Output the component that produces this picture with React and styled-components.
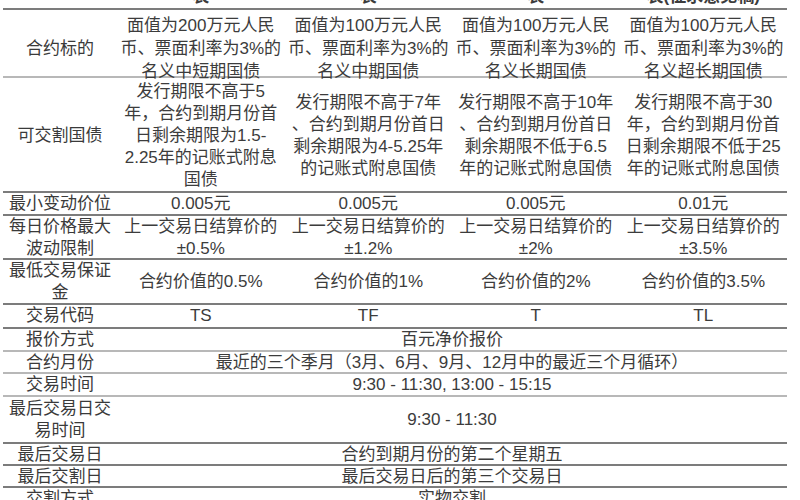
import React from "react";
import styled, { createGlobalStyle } from "styled-components";

const GlobalStyle = createGlobalStyle`
  html, body {
    margin: 0;
    padding: 0;
    background: #ffffff;
    overflow: hidden;
  }
  body {
    font-family: "Liberation Sans", "Noto Sans CJK SC", sans-serif;
    color: #3c3c3c;
  }
`;

const Page = styled.div`
  width: 800px;
  height: 500px;
  overflow: hidden;
  padding-left: 3px;
  box-sizing: border-box;
`;

const Table = styled.div`
  width: 784px;
  margin-top: -36px;
`;

const Row = styled.div`
  display: grid;
  grid-template-columns: 114px repeat(4, minmax(0, 1fr));
  height: ${(p) => p.$h}px;
  padding-top: ${(p) => p.$pt || 0}px;
  line-height: ${(p) => p.$lh || 22}px;
  box-sizing: border-box;
  border-bottom: 2px solid
    ${(p) => (p.$line === "light" ? "#b8b8b8" : p.$line === "none" ? "transparent" : "#7c7c7c")};
`;

const Cell = styled.div`
  display: flex;
  align-items: center;
  justify-content: center;
  text-align: center;
  font-size: 17px;
  white-space: pre-line;
  grid-column: ${(p) => (p.$span ? `span ${p.$span}` : "auto")};
  font-weight: ${(p) => (p.$head ? 700 : 400)};
`;

const LabelCell = styled(Cell)`
  color: #3a3a3a;
`;

const rows = [
  {
    h: 46,
    head: true,
    label: "",
    cells: [
      "2年期国债期货合约\n表",
      "5年期国债期货合约\n表",
      "10年期国债期货合约\n表",
      "30年期国债期货合约\n表(征求意见稿)",
    ],
  },
  {
    h: 68,
    lh: 23,
    pt: 4,
    line: "light",
    label: "合约标的",
    cells: [
      "面值为200万元人民\n币、票面利率为3%的\n名义中短期国债",
      "面值为100万元人民\n币、票面利率为3%的\n名义中期国债",
      "面值为100万元人民\n币、票面利率为3%的\n名义长期国债",
      "面值为100万元人民\n币、票面利率为3%的\n名义超长期国债",
    ],
  },
  {
    h: 115,
    pt: 2,
    label: "可交割国债",
    cells: [
      "发行期限不高于5\n年，合约到期月份首\n日剩余期限为1.5-\n2.25年的记账式附息\n国债",
      "发行期限不高于7年\n、合约到期月份首日\n剩余期限为4-5.25年\n的记账式附息国债",
      "发行期限不高于10年\n、合约到期月份首日\n剩余期限不低于6.5\n年的记账式附息国债",
      "发行期限不高于30\n年，合约到期月份首\n日剩余期限不低于25\n年的记账式附息国债",
    ],
  },
  {
    h: 23,
    label: "最小变动价位",
    cells: ["0.005元", "0.005元", "0.005元", "0.01元"],
  },
  {
    h: 44,
    label: "每日价格最大\n波动限制",
    cells: [
      "上一交易日结算价的\n±0.5%",
      "上一交易日结算价的\n±1.2%",
      "上一交易日结算价的\n±2%",
      "上一交易日结算价的\n±3.5%",
    ],
  },
  {
    h: 45,
    label: "最低交易保证\n金",
    cells: ["合约价值的0.5%", "合约价值的1%", "合约价值的2%", "合约价值的3.5%"],
  },
  { h: 24, label: "交易代码", cells: ["TS", "TF", "T", "TL"] },
  { h: 23, line: "light", label: "报价方式", span: "百元净价报价" },
  {
    h: 22,
    line: "light",
    label: "合约月份",
    span: "最近的三个季月（3月、6月、9月、12月中的最近三个月循环）",
  },
  { h: 23, line: "light", label: "交易时间", span: "9:30 - 11:30, 13:00 - 15:15" },
  { h: 47, label: "最后交易日交\n易时间", span: "9:30 - 11:30" },
  { h: 22, label: "最后交易日", span: "合约到期月份的第二个星期五" },
  { h: 22, label: "最后交割日", span: "最后交易日后的第三个交易日" },
  { h: 22, line: "none", label: "交割方式", span: "实物交割" },
];

export default function App() {
  return (
    <>
      <GlobalStyle />
      <Page>
        <Table>
          {rows.map((r, i) => (
            <Row key={i} $h={r.h} $lh={r.lh} $pt={r.pt} $line={r.line}>
              <LabelCell>{r.label}</LabelCell>
              {r.span ? (
                <Cell $span={4}>{r.span}</Cell>
              ) : (
                r.cells.map((c, j) => (
                  <Cell key={j} $head={r.head}>
                    {c}
                  </Cell>
                ))
              )}
            </Row>
          ))}
        </Table>
      </Page>
    </>
  );
}
